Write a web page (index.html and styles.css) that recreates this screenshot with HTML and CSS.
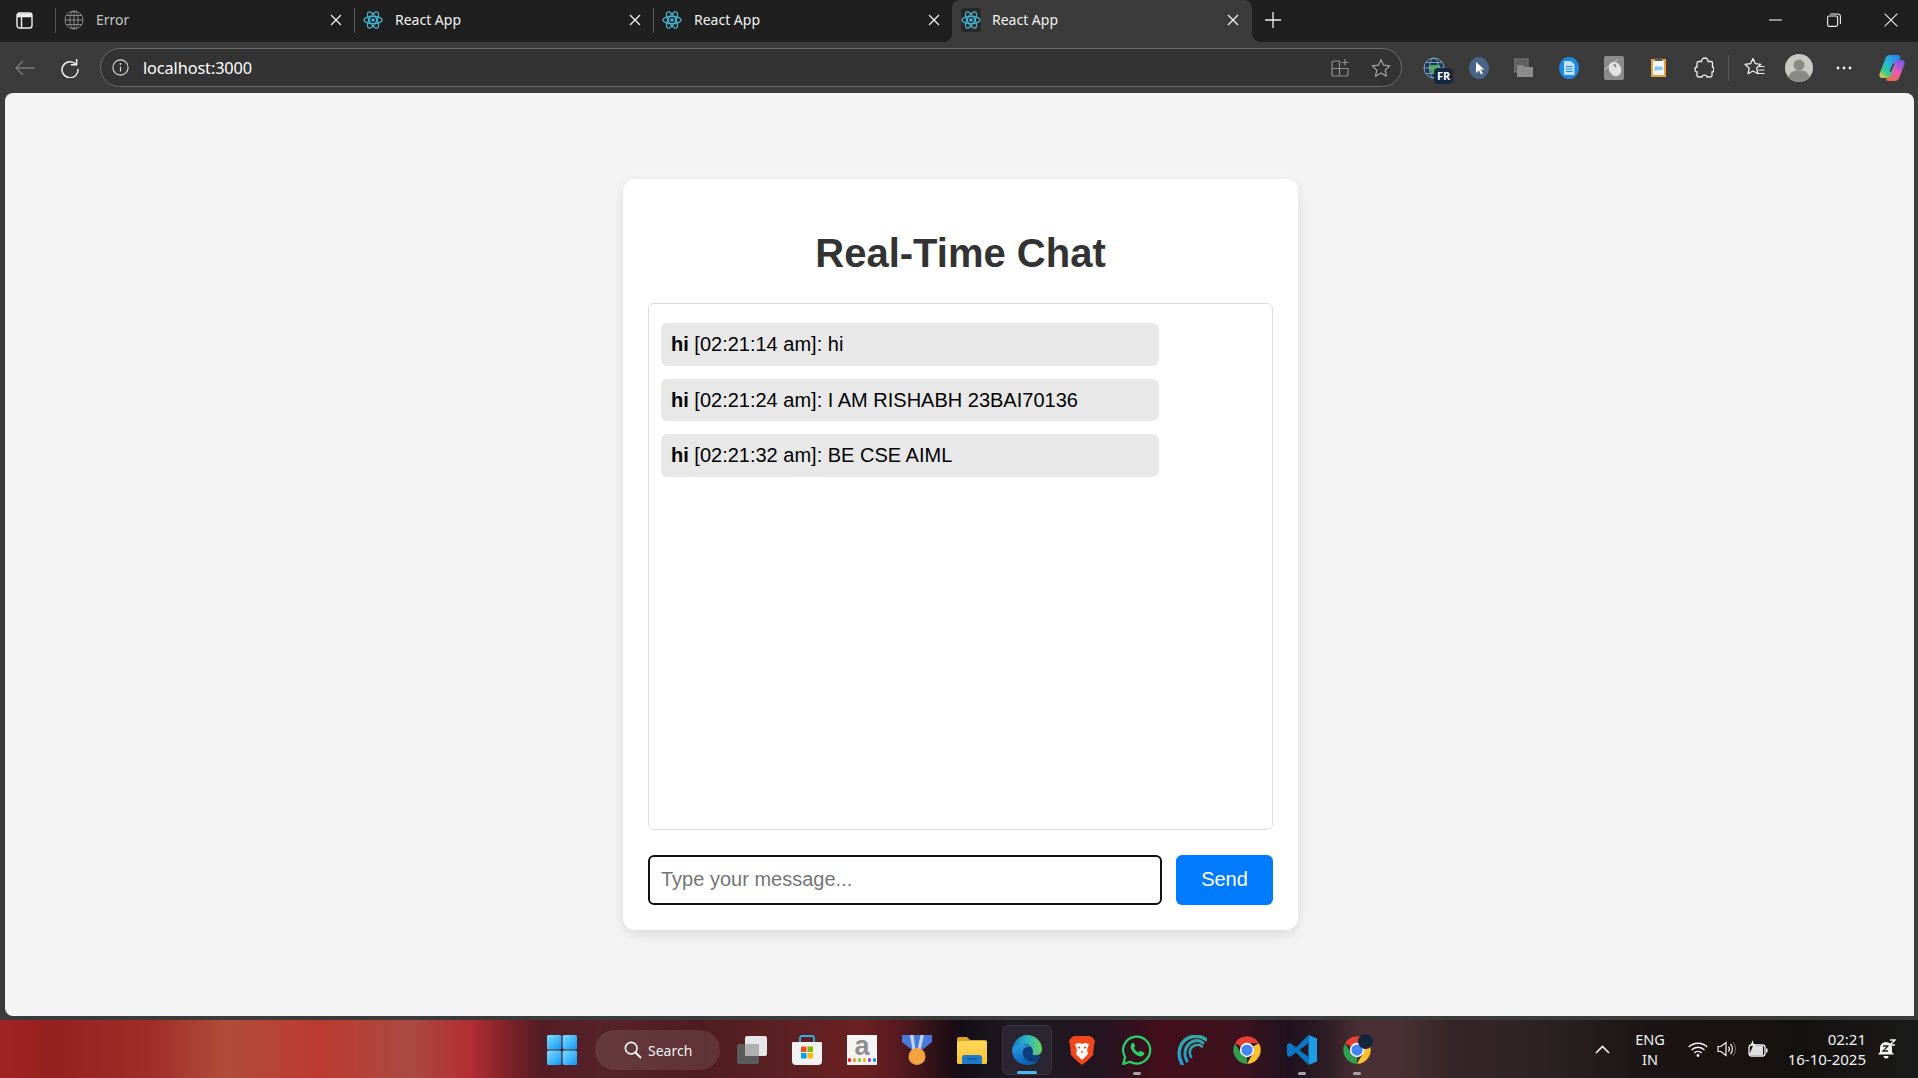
FILE: index.html
```html
<!DOCTYPE html>
<html lang="en">
<head>
<meta charset="utf-8">
<title>React App</title>
<link rel="stylesheet" href="styles.css">
</head>
<body>
<svg class="defs" width="0" height="0" aria-hidden="true">
  <defs>
    <symbol id="react" viewBox="0 0 24 24">
      <g fill="none" stroke="#45b4d2" stroke-width="1.5">
        <ellipse cx="12" cy="12" rx="11" ry="4.4"/>
        <ellipse cx="12" cy="12" rx="11" ry="4.4" transform="rotate(60 12 12)"/>
        <ellipse cx="12" cy="12" rx="11" ry="4.4" transform="rotate(120 12 12)"/>
      </g>
      <circle cx="12" cy="12" r="2.2" fill="#45b4d2"/>
    </symbol>
    <symbol id="x" viewBox="0 0 12 12">
      <path d="M1 1l10 10M11 1L1 11" stroke="#f2f2f2" stroke-width="1.3" fill="none"/>
    </symbol>
    <symbol id="chrome" viewBox="0 0 48 48">
      <path fill="#e34133" d="M4.95 13A22 22 0 0 1 43.05 13H24a11 11 0 0 0-9.53 5.5Z"/>
      <path fill="#fbc02d" transform="rotate(120 24 24)" d="M4.95 13A22 22 0 0 1 43.05 13H24a11 11 0 0 0-9.53 5.5Z"/>
      <path fill="#2f9e4f" transform="rotate(240 24 24)" d="M4.95 13A22 22 0 0 1 43.05 13H24a11 11 0 0 0-9.53 5.5Z"/>
      <circle cx="24" cy="24" r="11.5" fill="#fff"/>
      <circle cx="24" cy="24" r="9" fill="#4285f4"/>
    </symbol>
    <linearGradient id="winG" x1="0" y1="0" x2="1" y2="1">
      <stop offset="0" stop-color="#7fdcff"/>
      <stop offset="1" stop-color="#0f96f5"/>
    </linearGradient>
    <linearGradient id="copA" x1=".9" y1="0" x2=".1" y2="1">
      <stop offset="0" stop-color="#2a7ff0"/>
      <stop offset=".45" stop-color="#22b8d8"/>
      <stop offset=".75" stop-color="#3cc98a"/>
      <stop offset="1" stop-color="#f2c53a"/>
    </linearGradient>
    <linearGradient id="copB" x1=".7" y1="0" x2=".2" y2="1">
      <stop offset="0" stop-color="#7a5be8"/>
      <stop offset=".5" stop-color="#e65bb4"/>
      <stop offset="1" stop-color="#f0693c"/>
    </linearGradient>
    <linearGradient id="edgeTop" x1="0" y1=".5" x2="1" y2=".5">
      <stop offset="0" stop-color="#1478c0"/>
      <stop offset=".5" stop-color="#2bb6c8"/>
      <stop offset="1" stop-color="#6dd060"/>
    </linearGradient>
    <linearGradient id="edgeBody" x1="0" y1="0" x2=".3" y2="1">
      <stop offset="0" stop-color="#2aa0e8"/>
      <stop offset="1" stop-color="#0f62b8"/>
    </linearGradient>
    <linearGradient id="swirlG" x1="0" y1="0" x2="0" y2="1">
      <stop offset="0" stop-color="#2fa8a8"/>
      <stop offset="1" stop-color="#1d9fd0"/>
    </linearGradient>
    <linearGradient id="folderG" x1="0" y1="0" x2="0" y2="1">
      <stop offset="0" stop-color="#ffd75e"/>
      <stop offset="1" stop-color="#f8c22c"/>
    </linearGradient>
  </defs>
</svg>

<div class="browser">
  <header class="tabstrip">
    <div class="sidebtn">
      <svg width="17" height="17" viewBox="0 0 17 17"><rect x="1" y="1" width="15" height="15" rx="2.5" fill="none" stroke="#f0f0f0" stroke-width="1.4"/><path d="M1 4.5h15M5.5 4.5V16" stroke="#f0f0f0" stroke-width="1.4" fill="none"/><rect x="1.5" y="1.5" width="14" height="3" fill="#f0f0f0"/></svg>
    </div>
    <span class="tabsep"></span>
    <div class="tab">
      <svg class="favicon" width="20" height="20" viewBox="0 0 20 20"><g fill="none" stroke="#8a8a8a" stroke-width="1"><circle cx="10" cy="10" r="9"/><ellipse cx="10" cy="10" rx="4.2" ry="9"/><path d="M1 10h18M2.4 5.5h15.2M2.4 14.5h15.2M10 1v18"/></g></svg>
      <span class="tabtitle dim">Error</span>
      <svg class="tabclose" width="12" height="12"><use href="#x"/></svg>
    </div>
    <span class="tabsep"></span>
    <div class="tab">
      <svg class="favicon" width="20" height="20"><use href="#react"/></svg>
      <span class="tabtitle">React App</span>
      <svg class="tabclose" width="12" height="12"><use href="#x"/></svg>
    </div>
    <span class="tabsep"></span>
    <div class="tab">
      <svg class="favicon" width="20" height="20"><use href="#react"/></svg>
      <span class="tabtitle">React App</span>
      <svg class="tabclose" width="12" height="12"><use href="#x"/></svg>
    </div>
    <div class="tab active">
      <span class="favbox"><svg width="20" height="20"><use href="#react"/></svg></span>
      <span class="tabtitle">React App</span>
      <svg class="tabclose" width="12" height="12"><use href="#x"/></svg>
    </div>
    <svg class="newtab" width="16" height="16" viewBox="0 0 16 16"><path d="M8 0v16M0 8h16" stroke="#f0f0f0" stroke-width="1.3" fill="none"/></svg>
    <div class="winctrls">
      <svg width="14" height="14" viewBox="0 0 14 14"><path d="M0 7h13" stroke="#f0f0f0" stroke-width="1.1"/></svg>
      <svg width="14" height="14" viewBox="0 0 14 14"><rect x=".6" y="3" width="10" height="10.4" rx="1.6" fill="none" stroke="#f0f0f0" stroke-width="1.1"/><path d="M3 1h8a2.4 2.4 0 0 1 2.4 2.4V11" fill="none" stroke="#f0f0f0" stroke-width="1.1"/></svg>
      <svg width="14" height="14" viewBox="0 0 14 14"><path d="M.6.6l12.8 12.8M13.4.6L.6 13.4" stroke="#f0f0f0" stroke-width="1.1"/></svg>
    </div>
  </header>

  <nav class="toolbar">
    <svg class="nav-back" width="20" height="16" viewBox="0 0 20 16"><path d="M19.5 8H1M8 1L1 8l7 7" fill="none" stroke="#7b7b7b" stroke-width="1.3"/></svg>
    <svg class="nav-reload" width="20" height="20" viewBox="0 0 20 20"><path d="M15.8 6.2A8 8 0 1 0 18 11" fill="none" stroke="#f2f2f2" stroke-width="1.5"/><path d="M16.6 1v5.8h-5.8" fill="none" stroke="#f2f2f2" stroke-width="1.5"/></svg>
    <div class="addressbar">
      <svg width="17" height="17" viewBox="0 0 17 17"><circle cx="8.5" cy="8.5" r="7.6" fill="none" stroke="#d8d8d8" stroke-width="1.1"/><path d="M8.5 7.5v5" stroke="#d8d8d8" stroke-width="1.2"/><circle cx="8.5" cy="5" r=".9" fill="#d8d8d8"/></svg>
      <span class="url">localhost:3000</span>
      <svg class="addr-right" width="19" height="19" viewBox="0 0 19 19"><g fill="none" stroke="#8d8d8d" stroke-width="1.2"><path d="M8.5 3H3a2 2 0 0 0-2 2v11a2 2 0 0 0 2 2h12a2 2 0 0 0 2-2v-5.500H1M8.500 3v15"/><path d="M14 1v6.500M10.500 4.500h7"/></g></svg>
      <svg width="20" height="20" viewBox="0 0 20 20"><path d="M10 1.500l2.600 5.700 6.200.7-4.600 4.200 1.300 6.100L10 15.100l-5.500 3.100 1.300-6.100L1.200 7.900l6.200-.7z" fill="none" stroke="#a5a5a5" stroke-width="1.2" stroke-linejoin="round"/></svg>
    </div>
    <div class="exts">
      <span class="ext globe">
        <svg width="22" height="22" viewBox="0 0 22 22"><circle cx="11" cy="11" r="10" fill="#1f3550"/><path d="M6 8h11v9H8z" fill="#3fae49"/><g fill="none" stroke="#7f9ec2" stroke-width="1"><circle cx="11" cy="11" r="10"/><ellipse cx="11" cy="11" rx="4.500" ry="10"/><path d="M1 11h20M3 5.500h16M3 16.500h16"/></g></svg>
        <span class="frbadge">FR</span>
      </span>
      <span class="ext"><svg width="20" height="22" viewBox="0 0 20 22"><ellipse cx="10" cy="11" rx="10" ry="11" fill="#4a6389"/><path d="M7 5v11l3-2.600 2 4 1.800-.9-2-3.900h3.600z" fill="#fff"/></svg></span>
      <span class="ext"><svg width="20" height="20" viewBox="0 0 20 20"><rect x="0" y="1" width="14" height="13" fill="#5f5f5f" stroke="#7c7c7c"/><path d="M3 7h6l2 2h8v10H3z" fill="#8c8c8c"/></svg></span>
      <span class="ext"><svg width="20" height="22" viewBox="0 0 20 22"><ellipse cx="10" cy="11" rx="10" ry="11" fill="#1e88e5"/><path d="M5 4h7l3.500 3.500V18H5z" fill="#bfe0fb"/><path d="M7 9.500h6.500M7 12h6.500M7 14.500h6.500" stroke="#1e88e5" stroke-width="1.100"/></svg></span>
      <span class="ext"><svg width="20" height="24" viewBox="0 0 20 24"><rect width="20" height="24" rx="2" fill="#8b8b8b"/><path d="M0 14L14 3" stroke="#b5b5b5" stroke-width="1.500"/><ellipse cx="11" cy="13" rx="6" ry="7.500" fill="#e2e2e2" transform="rotate(-25 11 13)"/><path d="M10 8l2 3" stroke="#777" stroke-width="1.500"/></svg></span>
      <span class="ext"><svg width="15" height="19" viewBox="0 0 15 19"><rect x="1" y="2" width="13" height="16" fill="#f3f6fb" stroke="#e5a23a" stroke-width="2"/><rect x="4" y="0" width="7" height="3" fill="#5b5b4e"/><path d="M3.500 9c3-2 5 1 8-1v4c-3 1-5-.5-8 1z" fill="#8fc3ea"/></svg></span>
      <span class="ext"><svg width="20" height="22" viewBox="0 0 20 22"><path d="M7.500 4.500C7.500 2.500 9 1 10.800 1s3.200 1.500 3.200 3.500h3a1.500 1.500 0 0 1 1.500 1.500v4c2 .3 1.500 5-.3 5H18v3.500A1.500 1.500 0 0 1 16.500 20H13c0-2.500-5-2.500-5 0H4.500A1.500 1.500 0 0 1 3 18.500V15c-2.700 0-2.700-5 0-5V6a1.500 1.500 0 0 1 1.500-1.500z" fill="none" stroke="#f0f0f0" stroke-width="1.300"/></svg></span>
    </div>
    <span class="toolsep"></span>
    <div class="tools">
      <span class="tool"><svg width="21" height="21" viewBox="0 0 21 21"><path d="M9 1.500l2.300 5.200 5.600.6-4.200 3.800 1.200 5.600L9 14l-5 2.800 1.200-5.600L1 7.300l5.600-.6z" fill="none" stroke="#f0f0f0" stroke-width="1.300" stroke-linejoin="round"/><path d="M15 9.500h5.500M14.500 13h6M13.500 16.500h7" stroke="#f0f0f0" stroke-width="1.200"/></svg></span>
      <span class="tool"><svg width="28" height="28" viewBox="0 0 28 28"><circle cx="14" cy="14" r="14" fill="#c9c9c4"/><circle cx="14" cy="11" r="5.500" fill="#8a8a85"/><path d="M3.500 23c2-6 6-6.500 10.500-6.500S22.500 17 24.500 23A14 14 0 0 1 3.500 23z" fill="#8a8a85"/></svg></span>
      <span class="tool"><svg width="16" height="4" viewBox="0 0 16 4"><circle cx="2" cy="2" r="1.400" fill="#f0f0f0"/><circle cx="8" cy="2" r="1.400" fill="#f0f0f0"/><circle cx="14" cy="2" r="1.400" fill="#f0f0f0"/></svg></span>
      <span class="tool copilot"><svg width="28" height="28" viewBox="0 0 28 28"><path d="M8 3C9 1.500 10 1 12 1h8c2 0 3 2 2 4l-7 17c-1 2-3 3-5 2H4c-2 0-3-2-2.500-4z" fill="url(#copA)"/><path d="M17 6h7c2 0 3 2 2.500 4L22 22c-1 3-3 5-5 5h-7c-2 0-2-2-1-3l4-2z" fill="url(#copB)"/><path d="M15.500 10l-3 7" stroke="#3b3b3b" stroke-width="1.600" stroke-linecap="round"/></svg></span>
    </div>
  </nav>

  <div class="viewport">
    <main class="page">
      <section class="chat">
        <h1 class="chat-title">Real-Time Chat</h1>
        <div class="messages">
          <p class="msg"><strong>hi</strong> [02:21:14 am]: hi</p>
          <p class="msg"><strong>hi</strong> [02:21:24 am]: I AM RISHABH 23BAI70136</p>
          <p class="msg"><strong>hi</strong> [02:21:32 am]: BE CSE AIML</p>
        </div>
        <form class="composer">
          <input class="composer-input" type="text" placeholder="Type your message...">
          <button class="composer-send" type="button">Send</button>
        </form>
      </section>
    </main>
  </div>

  <footer class="taskbar">
    <span class="tb-item start">
      <svg width="30" height="30" viewBox="0 0 30 30"><rect x="0" y="0" width="14.400" height="14.400" rx="1.500" fill="url(#winG)"/><rect x="15.600" y="0" width="14.400" height="14.400" rx="1.500" fill="url(#winG)"/><rect x="0" y="15.600" width="14.400" height="14.400" rx="1.500" fill="url(#winG)"/><rect x="15.600" y="15.600" width="14.400" height="14.400" rx="1.500" fill="url(#winG)"/></svg>
    </span>
    <div class="tb-search">
      <svg width="18" height="18" viewBox="0 0 18 18"><circle cx="7.200" cy="7.200" r="5.800" fill="none" stroke="#fff" stroke-width="1.600"/><path d="M11.500 11.500L17 17" stroke="#fff" stroke-width="1.800"/></svg>
      <span>Search</span>
    </div>
    <span class="tb-item"><svg width="30" height="28" viewBox="0 0 30 28"><rect x="0" y="8" width="22" height="20" rx="2" fill="#5c5c5c"/><rect x="8" y="0" width="22" height="20" rx="2" fill="#e6e6e6"/><rect x="8" y="8" width="14" height="12" fill="#b0b0b0"/></svg></span>
    <span class="tb-item"><svg width="30" height="30" viewBox="0 0 30 30"><path d="M8 8V3a2 2 0 0 1 2-2h10a2 2 0 0 1 2 2v5" fill="none" stroke="#2fb2e8" stroke-width="1.800"/><path d="M1 7h28a1 1 0 0 1 1 1v18a4 4 0 0 1-4 4H4a4 4 0 0 1-4-4V8a1 1 0 0 1 1-1z" fill="#f2f2f2"/><rect x="9" y="11.500" width="5.500" height="5.500" fill="#f25022"/><rect x="15.500" y="11.500" width="5.500" height="5.500" fill="#7fba00"/><rect x="9" y="18" width="5.500" height="5.500" fill="#00a4ef"/><rect x="15.500" y="18" width="5.500" height="5.500" fill="#ffb900"/></svg></span>
    <span class="tb-item"><span class="atile"><span class="atile-a">a</span><span class="atile-dots"><i class="d1"></i><i class="d2"></i><i class="d3"></i><i class="d4"></i><i class="d5"></i><i class="d6"></i></span></span></span>
    <span class="tb-item"><svg width="30" height="30" viewBox="0 0 30 30"><path d="M0 0h30v7l-10 8h-10L0 7z" fill="#4a78dc"/><path d="M8 0h3.500l2 15h-3zM18.500 0H22l-3.500 15h-3z" fill="#c3d5f5"/><circle cx="15" cy="21.500" r="8.500" fill="#f4a23f"/></svg></span>
    <span class="tb-item"><svg width="30" height="28" viewBox="0 0 30 28"><path d="M0 3a2 2 0 0 1 2-2h8l3 3h15a2 2 0 0 1 2 2v3H0z" fill="#dca11e"/><rect x="0" y="5" width="30" height="23" rx="1.500" fill="url(#folderG)"/><path d="M5 28v-6a3 3 0 0 1 3-3h14a3 3 0 0 1 3 3v6z" fill="#1f78c8"/><path d="M10 23h10" stroke="#0f4f8e" stroke-width="1.200"/></svg></span>
    <span class="tb-item edge">
      <svg width="30" height="30" viewBox="0 0 30 30"><path d="M0 15C0 24 7 30 15 30c4 0 8-1 11-4-6 2-14 0-15-7-1-5 4-9 9-6C15 8 0 6 0 15z" fill="url(#edgeBody)"/><path d="M20 13c2 2 1 4 1 5 0 3 5 4 8 1-1 3-2 5-3 7-6 2-14 0-15-7-1-5 4-9 9-6z" fill="#0d3f7e"/><path d="M0 15C1 6 8 0 15 0c9 0 15 7 15 14 0 5-4 7-7 6-2 0-3-1-2-3 0-5-4-8-9-8-6 0-11 2-12 6z" fill="url(#edgeTop)"/></svg>
    </span>
    <span class="tb-item"><svg width="26" height="30" viewBox="0 0 26 30"><path d="M5 1h16l3 2 2 3-1 4-1 10-6 6-5 4-5-4-6-6-1-10-1-4 2-3z" fill="#f1471d"/><path d="M6 9l4-1 3 1 3-1 4 1-2 6 1 4-3 3-3 3-3-3-3-3 1-4z" fill="#fff"/><path d="M9 12l2 1M15 13l2-1M12 17h2" stroke="#f1471d" stroke-width="1.500"/></svg></span>
    <span class="tb-item running"><svg width="30" height="30" viewBox="0 0 30 30"><path d="M1.200 29l1.900-7A13.500 13.500 0 1 1 8 26.800z" fill="none" stroke="#25d366" stroke-width="2.200" stroke-linejoin="round"/><path d="M10.500 8c-1.500 1-2.500 3-1.500 5.500 1.500 3.500 4 6 7.500 7.500 2.500 1 4.500 0 5.500-1.500.5-1 .3-1.700-.3-2l-2.800-1.400c-.6-.3-1.100 0-1.400.5l-.8 1c-2.500-1-4-2.500-5-5l1-.9c.4-.4.500-.8.300-1.300L11.800 8.300c-.3-.5-.8-.6-1.300-.3z" fill="#25d366"/></svg></span>
    <span class="tb-item"><svg width="30" height="30" viewBox="0 0 30 30"><g fill="none" stroke="url(#swirlG)" stroke-linecap="round"><path d="M5 29C-1 18 3 5 14 2c6-1.500 11-.5 15 2.500" stroke-width="3.500"/><path d="M10 26C5 17 10 8 17 6c4-1 7 0 9 2" stroke-width="3"/><path d="M14 22c-3-6 0-11 5-12 3-.5 5 .5 6 1.500" stroke-width="2.500"/></g></svg></span>
    <span class="tb-item"><svg width="30" height="30"><use href="#chrome"/></svg></span>
    <span class="tb-item running"><svg width="30" height="30" viewBox="0 0 30 30"><path d="M21.500 0L30 3.500v23L21.500 30z" fill="#1e9ce8"/><path d="M21.500 0L9 12.500 3 8 0 9.500v11L3 22l6-4.500L21.500 30v-8L12.500 15l9-7z" fill="#0a78c4"/></svg></span>
    <span class="tb-item running"><span class="chrome-pair"><svg width="30" height="30"><use href="#chrome"/></svg><span class="profile-dot"></span></span></span>

    <div class="tray">
      <svg class="tray-caret" width="15" height="9" viewBox="0 0 15 9"><path d="M1 8l6.500-6.500L14 8" fill="none" stroke="#f0f0f0" stroke-width="1.600"/></svg>
      <span class="lang">ENG<br>IN</span>
      <svg class="tray-wifi" width="20" height="15" viewBox="0 0 20 15"><g fill="none" stroke="#f5f5f5" stroke-width="1.400"><path d="M.8 5a13 13 0 0 1 18.400 0M3.500 8a9 9 0 0 1 13 0M6.300 11a5 5 0 0 1 7.400 0"/></g><circle cx="10" cy="13.500" r="1.400" fill="#f5f5f5"/></svg>
      <svg class="tray-vol" width="20" height="16" viewBox="0 0 20 16"><path d="M1 5.500h3L9 1.500v13l-5-4H1z" fill="none" stroke="#f5f5f5" stroke-width="1.200"/><path d="M11.500 5.500a4 4 0 0 1 0 5M13.500 3a7.500 7.500 0 0 1 0 10" fill="none" stroke="#f5f5f5" stroke-width="1.200"/><path d="M16 1a11 11 0 0 1 0 14" fill="none" stroke="#666" stroke-width="1.100"/></svg>
      <svg class="tray-bat" width="20" height="18" viewBox="0 0 20 18"><rect x="1" y="5" width="16" height="11" rx="2.500" fill="none" stroke="#f5f5f5" stroke-width="1.300"/><path d="M1 15l4-9h10v9z" fill="#f5f5f5" opacity=".9"/><rect x="18" y="8.500" width="1.500" height="4" fill="#f5f5f5"/><path d="M5 0L2.500 5h3L4.500 8.500 8 4H5.500z" fill="#f5f5f5"/></svg>
      <div class="clock"><span>02:21</span><span>16-10-2025</span></div>
      <svg class="tray-bell" width="18" height="20" viewBox="0 0 18 20"><path d="M8 3a6 6 0 0 1 6 5.500V13l2 2.500H0L2 13V8.500A6 6 0 0 1 8 3z" fill="#f5f5f5"/><path d="M5.500 17a2.500 2.500 0 0 0 5 0z" fill="#f5f5f5"/><path d="M5 7h5l-5 5h5" fill="none" stroke="#222" stroke-width="1.300"/><path d="M12 1h5l-5 5h5" fill="none" stroke="#f5f5f5" stroke-width="1.500"/></svg>
    </div>
  </footer>
</div>
</body>
</html>
```

FILE: styles.css
```css
* { box-sizing: border-box; }
html, body { margin: 0; padding: 0; height: 100%; overflow: hidden; }
body { font-family: "Noto Sans", "Open Sans", sans-serif; background: #3b3b3b; color: #f2f2f2; }
svg { display: block; flex: none; }
.defs { position: absolute; }

.browser { display: flex; flex-direction: column; width: 1918px; height: 1078px; }

/* Tab strip */
.tabstrip { display: flex; align-items: center; height: 42px; background: #1f1f1f; flex: none; }
.sidebtn { width: 55px; padding: 0 0 2px 16px; }
.tabsep { width: 1px; height: 25px; margin-bottom: 1px; background: #5a5a5a; flex: none; }
.tab { display: flex; align-items: center; width: 298px; height: 42px; padding: 0 12px 3px 8px; font-size: 14px; }
.tab .favicon { margin-right: 12px; }
.tabtitle { flex: 1; color: #f2f2f2; }
.tabtitle.dim { color: #c6c6c6; }
.tab.active { position: relative; width: 300px; background: #3b3b3b; border-radius: 8px 8px 0 0; padding: 0 13px 3px 9px; }
.tab.active::before, .tab.active::after { content: ""; position: absolute; bottom: 0; width: 8px; height: 8px; }
.tab.active::before { left: -8px; background: radial-gradient(circle at 0 0, transparent 7.5px, #3b3b3b 8px); }
.tab.active::after { right: -8px; background: radial-gradient(circle at 100% 0, transparent 7.5px, #3b3b3b 8px); }
.favbox { display: flex; align-items: center; justify-content: center; width: 20px; height: 24px; margin-right: 11px; background: #282828; border-radius: 3px; }
.newtab { margin: 0 0 2px 13px; }
.winctrls { display: flex; gap: 43.500px; margin: 0 0 2px auto; padding-right: 20px; }

/* Toolbar */
.toolbar { display: flex; align-items: center; height: 51px; flex: none; background: #3b3b3b; padding-left: 15px; }
.nav-back { margin-right: 25px; }
.nav-reload { margin-right: 20px; }
.addressbar { display: flex; align-items: center; width: 1302px; height: 39px; background: #333; border: 1px solid #6b6b6b; border-radius: 20px; padding: 0 10px 0 11px; }
.url { font-size: 16.300px; color: #fff; margin-left: 14px; flex: 1; letter-spacing: -.1px; }
.addr-right { margin-right: 21px; }
.exts { display: flex; margin-left: 9px; }
.ext { display: flex; align-items: center; justify-content: center; width: 45px; height: 34px; }
.globe { position: relative; }
.frbadge { position: absolute; left: 23px; top: 17px; padding: 0 3px; font: 700 11px/16px "Open Sans", sans-serif; color: #fff; background: #16283f; border-radius: 4px; }
.toolsep { width: 1px; height: 26px; background: #5c5c5c; margin-left: 2px; }
.tools { display: flex; margin-left: 2.500px; }
.tool { display: flex; align-items: center; justify-content: center; width: 45px; height: 34px; }
.copilot { margin-left: 3px; }

/* Page */
.viewport { flex: 1; min-height: 0; padding: 0 4px 4px 5px; background: #3b3b3b; }
.page { display: flex; align-items: center; justify-content: center; height: 100%; padding-left: 2px; background: #f4f4f4; border-radius: 8px 8px 0 8px; font-family: "Liberation Sans", Arial, sans-serif; }
.chat { display: flex; flex-direction: column; width: 675px; height: 751px; padding: 0 25px 25px; background: #fff; border-radius: 12px; box-shadow: 0 5px 13px rgba(0, 0, 0, .1); color: #000; }
.chat-title { margin: 51px 0 27px; font-size: 40px; line-height: 46px; font-weight: 700; text-align: center; color: #333; }
.messages { flex: 1; min-height: 0; padding: 19px 12px; background: #fff; border: 1px solid #ddd; border-radius: 6px; }
.msg { width: 498px; height: 42.500px; margin: 0 0 13px; padding: 0 10px; font-size: 20px; line-height: 42px; background: #e8e8e8; border-radius: 6px; }
.composer { display: flex; gap: 14px; margin-top: 25px; }
.composer-input { flex: 1; min-width: 0; height: 50px; padding: 0 11px 2px; font: 20px "Liberation Sans", Arial, sans-serif; color: #000; background: #fff; border: 2px solid #111; border-radius: 6px; outline: none; }
.composer-input::placeholder { color: #757575; opacity: 1; }
.composer-send { width: 97px; height: 50px; padding: 0 0 2px; font: 20px "Liberation Sans", Arial, sans-serif; color: #fff; background: #007bff; border: 0; border-radius: 6px; }

/* Taskbar */
.taskbar {
  display: flex; align-items: center; height: 58px; flex: none; padding-left: 534.500px;
  background: linear-gradient(90deg, #a02424 0, #95201f 50px, #a12d28 150px, #b04c3a 225px, #bd3a30 320px, #a94a42 410px, #b32e33 470px, #7c2228 510px, #541c24 540px, #55232a 600px, #4e1c20 700px, #5b2024 780px, #6b2020 860px, #551a20 900px, #140c14 960px, #1d1a22 1010px, #241420 1100px, #420f1b 1160px, #3d121e 1240px, #20121f 1290px, #2a1a22 1320px, #4a2f34 1360px, #4a3033 1400px, #362528 1450px, #2c2224 1540px, #1a1514 1650px, #14120f 1800px, #1a1a1a 1918px);
}
.tb-item { position: relative; display: flex; align-items: center; justify-content: center; width: 55px; height: 50px; flex: none; margin-top: 2px; }
.start { margin-right: 5.500px; }
.tb-search { display: flex; align-items: center; gap: 6px; width: 125px; height: 40px; margin: 2px 4.500px 0 0; padding-left: 29px; background: rgba(255, 255, 255, .1); border-radius: 20px; font-size: 14px; color: #f2f2f2; }
.edge { background: #2a2530; border: 1px solid #39343d; border-radius: 6px; width: 50px; margin: 2px 2.500px 0; }
.edge::after { content: ""; position: absolute; left: 14px; bottom: 0; width: 20px; height: 3px; border-radius: 2px; background: #4cb8f0; }
.running::after { content: ""; position: absolute; left: 23.500px; bottom: 0; width: 8px; height: 3px; border-radius: 2px; background: #a8a2a6; }
.atile { display: flex; flex-direction: column; align-items: center; width: 30px; height: 30px; background: #f4f4f4; }
.atile-a { font: 700 27px/22px "Liberation Sans", Arial, sans-serif; color: #8e8e8e; }
.atile-dots { display: flex; gap: 1.500px; margin-top: 1px; }
.atile-dots i { width: 3.500px; height: 3.500px; border-radius: 50%; }
.d1 { background: #e8141c; }
.d2 { background: #f7941d; }
.d3 { background: #8dc63f; }
.d4 { background: #f7b500; }
.d5 { background: #8e44dd; }
.d6 { background: #1e88e5; }
.chrome-pair { position: relative; display: block; width: 30px; height: 30px; }
.profile-dot { position: absolute; right: -1px; top: -1px; width: 15px; height: 15px; border-radius: 50%; background: #14263d; }

.tray { display: flex; align-items: center; margin-left: auto; padding-right: 22px; height: 58px; }
.tray-caret { margin-right: 24px; }
.lang { width: 32px; margin-right: 22px; text-align: center; font-size: 14.500px; line-height: 20px; color: #f2f2f2; }
.tray-vol { margin-left: 9px; }
.tray-bat { margin-left: 11px; }
.clock { display: flex; flex-direction: column; align-items: flex-end; width: 98px; font-size: 15px; line-height: 20px; color: #f2f2f2; }
.tray-bell { margin-left: 12px; }
```
